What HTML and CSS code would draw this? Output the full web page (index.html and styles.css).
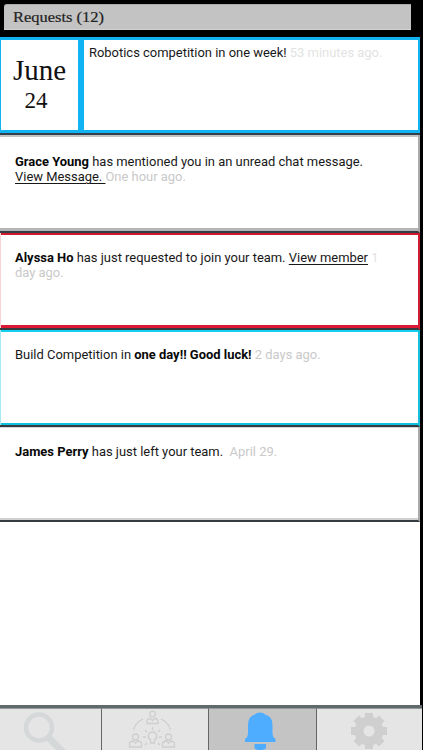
FILE: index.html
```html
<!DOCTYPE html>
<html lang="en">
<head>
<meta charset="utf-8">
<title>Requests</title>
<link rel="stylesheet" href="styles.css">
</head>
<body>
<div class="app">
  <header class="top"><h1 class="title"><span>Requests (12)</span></h1></header>
  <main class="feed">
    <article class="card event">
      <div class="date"><span class="month">June</span><span class="day">24</span></div>
      <p class="event-text">Robotics competition in one week! <span class="time faint">53 minutes ago.</span></p>
    </article>
    <article class="card plain mention">
      <p><b>Grace Young</b> has mentioned you in an unread chat message.<br><a class="link">View Message.&nbsp;</a><span class="time">One hour ago.</span></p>
    </article>
    <article class="card alert">
      <p><b>Alyssa Ho</b> has just requested to join your team. <a class="link">View member</a> <span class="time"><span class="faint">1</span><br>day ago.</span></p>
    </article>
    <article class="card info">
      <p>Build Competition in <b>one day!! Good luck!</b> <span class="time">2 days ago.</span></p>
    </article>
    <article class="card plain last">
      <p><b>James Perry</b> has just left your team.&nbsp; <span class="time">April 29.</span></p>
    </article>
  </main>
  <nav class="tabs">
    <div class="tab">
      <svg width="101" height="41" viewBox="0 0 101 41"><g fill="none" stroke="#d5d8d8"><circle cx="39" cy="18.500" r="13" stroke-width="4.500"/><path d="M49 29L64 44" stroke-width="7"/></g></svg>
    </div>
    <div class="tab">
      <svg width="106" height="41" viewBox="0 0 106 41"><g fill="none" stroke="#cdcfcf" stroke-width="1.300"><circle cx="50.500" cy="5" r="2.800"/><path d="M45 14.500v-2q0-3 3.500-3l2 2 2-2q3.500 0 3.500 3v2z"/><circle cx="33.500" cy="28" r="3"/><path d="M27.500 38v-2.500q0-3.500 4-3.500l2 2 2-2q4 0 4 3.500V38z"/><circle cx="66.500" cy="28" r="3"/><path d="M60.500 38v-2.500q0-3.500 4-3.500l2 2 2-2q4 0 4 3.500V38z"/><path d="M41 10Q33 14 31.500 21M59 10Q67 14 68.500 21"/><path d="M48.500 34v-3c-4-3-2-8 2-8s6 5 2 8v3zM50.500 18v3M43 21l2 2M58 21l-2 2M41 28h3M57 28h3M43 36l2-2M58 36l-2-2"/></g></svg>
    </div>
    <div class="tab active">
      <svg width="106" height="41" viewBox="0 0 106 41"><path fill="#4fadff" d="M47 5Q47 3.500 51 3.500T55 5Q63.500 7 63.500 16V25Q63.500 28 66.500 30V33H36V30Q39 28 39 25V16Q39 7 47 5ZM45.500 35H57V39Q55.500 41 51 41T45.500 39Z"/></svg>
    </div>
    <div class="tab">
      <svg width="104" height="41" viewBox="0 0 104 41"><g transform="translate(52 22)" fill="none" stroke="#cfcfcf"><circle r="10" stroke-width="9"/><path stroke-width="8" d="M0-18V-12M0 12V18M-18 0H-12M12 0H18"/><path stroke-width="8" d="M0-18V-12M0 12V18M-18 0H-12M12 0H18" transform="rotate(45)"/></g></svg>
    </div>
  </nav>
</div>
</body>
</html>
```
FILE: styles.css
```css
* { box-sizing: border-box; }
body { margin: 0; background: #000; }
.app { width: 423px; height: 750px; display: flex; flex-direction: column; overflow: hidden; background: #000; }
.top { height: 37px; flex: none; padding: 4px 12px 0 4px; }
.title { margin: 0; height: 26px; padding-left: 9px; border-radius: 3px 0 0 0; background: #c3c3c3; border: 1px solid #aaa; border-bottom-color: #d2d2d2; border-width: 1px 0; font: 14.5px/24px "Liberation Serif", serif; color: #222; }
.title span { display: inline-block; transform: scaleX(1.135); transform-origin: left; -webkit-text-stroke: .2px #222; }
.feed { width: 420px; height: 668px; flex: none; background: #fff; font: 12.95px/15px Roboto, sans-serif; color: #181818; }
.card { height: 97px; border-bottom: 2px solid #343c42; display: flex; background: #fff; }
.card p { margin: 0; white-space: nowrap; }
.card b { font-weight: 700; color: #080808; }
.event { height: 98px; background: #12b3f2; padding: 3px 2px 3px 1px; border-bottom: 2px solid #34404a; gap: 6px; }
.date { width: 77px; background: #fff; display: flex; flex-direction: column; align-items: center; font-family: "Liberation Serif", serif; color: #111; }
.month { font-size: 29px; line-height: 30px; margin-top: 15px; }
.day { font-size: 23px; line-height: 28px; margin: 2px 7px 0 0; }
.card .event-text { flex: 1; background: #fff; padding: 5px 0 0 5px; }
.plain { border-right: 2px solid #aaa; box-shadow: inset 0 2px #c4c4c4, inset 0 -3px #b5b5b5; padding: 19px 0 0 15px; }
.mention { height: 98px; }
.alert { border-right: 2px solid #d11b32; box-shadow: inset 1px 0 #fbd3d9, inset 0 2px #cf172d, inset 0 -3px #dc1834; padding: 17px 0 0 15px; }
.info { border-right: 2px solid #17bfdc; box-shadow: inset 1px 0 #a5e9f6, inset 0 2px #14cfee, inset 0 -2px #12c1df; padding: 17px 0 0 15px; }
.last { height: 95px; padding-top: 17px; box-shadow: inset 0 1px #d5d5d5, inset 0 -2px #d0d0d0; }
.link { text-decoration: underline; text-underline-offset: 2px; text-decoration-thickness: 1px; }
.time { color: #c9c9c9; }
.faint { color: #e3e3e3; }
.tabs { height: 45px; flex: none; width: 422px; border-top: 3px solid #60696c; display: grid; grid-template-columns: 102px 107px 108px 105px; background: #e5e5e5; }
.tab { height: 42px; border-right: 1px solid #666; border-top: 1px solid #939999; background: #e5e5e5; overflow: hidden; }
.tab:last-child { border-right: 0; }
.tab svg { display: block; }
.active { background: #c4c4c4; }
```
